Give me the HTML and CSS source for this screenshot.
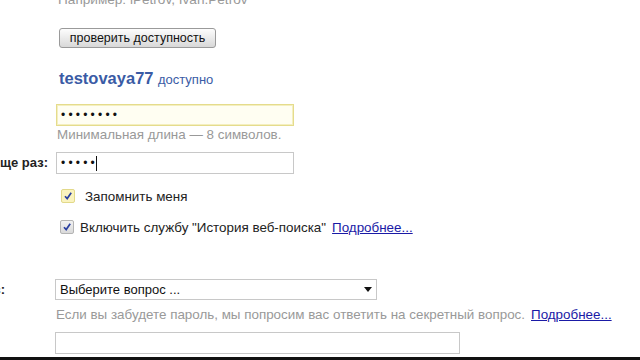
FILE: index.html
```html
<!DOCTYPE html>
<html lang="ru">
<head>
    <meta charset="UTF-8">
    <title>Регистрация</title>
    <link rel="stylesheet" href="styles.css">
</head>
<body>
    <div class="page">
        <div class="form">
            <div class="row row-example">
                <div class="label"></div>
                <div class="field"><div class="hint hint-example">Например: iPetrov, Ivan.Petrov</div></div>
            </div>

            <div class="row row-check">
                <div class="label"></div>
                <div class="field"><button class="btn">проверить доступность</button></div>
            </div>

            <div class="row row-login">
                <div class="label"></div>
                <div class="field"><span class="login">testovaya77</span> <span class="free">доступно</span></div>
            </div>

            <div class="row row-pass">
                <div class="label"></div>
                <div class="field">
                    <div class="input input-active"><span class="dots">••••••••</span></div>
                    <div class="hint hint-pass">Минимальная длина — 8 символов.</div>
                </div>
            </div>

            <div class="row row-pass2">
                <div class="label"><span>Введите пароль еще раз:</span></div>
                <div class="field">
                    <div class="input"><span class="dots">•••••</span><span class="caret"></span></div>
                </div>
            </div>

            <div class="row row-remember">
                <div class="label"></div>
                <div class="field check-line">
                    <span class="checkbox checkbox-focus">
                        <svg width="10" height="10" viewBox="0 0 10 10"><path d="M2 5.2 L4.2 7.6 L8.2 1.8" fill="none" stroke="#2a3fa0" stroke-width="1.7"/></svg>
                    </span>
                    <span class="check-text check-text-wide">Запомнить меня</span>
                </div>
            </div>

            <div class="row row-history">
                <div class="label"></div>
                <div class="field check-line">
                    <span class="checkbox">
                        <svg width="10" height="10" viewBox="0 0 10 10"><path d="M2 5.2 L4.2 7.6 L8.2 1.8" fill="none" stroke="#2a3fa0" stroke-width="1.7"/></svg>
                    </span>
                    <span class="check-text">Включить службу "История веб-поиска"</span>
                    <a class="more" href="#">Подробнее...</a>
                </div>
            </div>

            <div class="row row-question">
                <div class="label label-question"><span>Секретный вопрос:</span></div>
                <div class="field">
                    <div class="select">
                        <span>Выберите вопрос ...</span>
                        <svg width="8" height="5" viewBox="0 0 8 5"><path d="M0 0 H8 L4 5 Z" fill="#111"/></svg>
                    </div>
                    <div class="hint hint-question">Если вы забудете пароль, мы попросим вас ответить на секретный вопрос.<a class="more" href="#">Подробнее...</a></div>
                    <div class="input input-answer"></div>
                </div>
            </div>
        </div>
        <div class="video-bar"></div>
    </div>
</body>
</html>
```

FILE: styles.css
```css
* {
    margin: 0;
    padding: 0;
    box-sizing: border-box;
}

body {
    font-family: "Liberation Sans", Arial, sans-serif;
    background: #fff;
    color: #222;
    overflow: hidden;
}

.page {
    height: 360px;
    display: flex;
    flex-direction: column;
    overflow: hidden;
}

.form {
    flex: 1;
}

.row {
    display: flex;
    gap: 7px;
}

.label {
    width: 48px;
    flex-shrink: 0;
    display: flex;
    justify-content: flex-end;
    white-space: nowrap;
    font-size: 13px;
    font-weight: bold;
    color: #222;
    line-height: 22px;
}

.label-question {
    padding-right: 43px;
}

.field {
    flex: 1;
    min-width: 0;
}

.hint {
    color: #999;
    font-size: 13.4px;
    line-height: 16px;
    white-space: nowrap;
}

.row-example {
    margin-top: -8px;
}

.hint-example {
    font-size: 13.6px;
    padding-left: 3px;
}

.row-check {
    margin-top: 20px;
}

.btn {
    display: block;
    margin-left: 4px;
    width: 157px;
    height: 20px;
    font-family: "Liberation Sans", Arial, sans-serif;
    font-size: 12.5px;
    color: #111;
    border: 1px solid #9a9a9a;
    border-radius: 3px;
    background: linear-gradient(#fdfdfd 0%, #e9e9e9 55%, #d8d8d8 100%);
}

.row-login {
    margin-top: 20px;
    line-height: 20px;
}

.row-login .field {
    padding-left: 4px;
}

.login {
    color: #3a5ba5;
    font-size: 16.5px;
    font-weight: bold;
}

.free {
    color: #3a5ba5;
    font-size: 13px;
}

.row-pass {
    margin-top: 14px;
}

.input {
    width: 238px;
    height: 22px;
    border: 1px solid #c8c8c8;
    background: #fff;
    display: flex;
    align-items: center;
    padding-left: 4px;
    margin-left: 1px;
}

.input-active {
    border-color: #e5dc8c;
    box-shadow: inset 0 0 0 1px #f4efc0;
    background: #fffef2;
}

.dots {
    font-size: 12px;
    letter-spacing: 3.2px;
    color: #111;
    line-height: 14px;
}

.caret {
    display: inline-block;
    width: 1px;
    height: 15px;
    margin-left: -2px;
    background: #111;
}

.hint-pass {
    margin-top: 1px;
    padding-left: 2px;
}

.row-pass2 {
    margin-top: 9px;
}

.check-line {
    display: flex;
    align-items: center;
    font-size: 13.4px;
    color: #222;
    height: 14px;
}

.checkbox {
    width: 14px;
    height: 14px;
    border: 1px solid #b4b4b4;
    border-radius: 2px;
    background: linear-gradient(#f2f2f2, #d9d9d9);
    display: flex;
    align-items: center;
    justify-content: center;
    margin-left: 5px;
}

.checkbox-focus {
    margin-left: 6px;
    border-color: #e2d98a;
    background: #faf3bf;
}

.check-text {
    margin-left: 6px;
}

.check-text-wide {
    margin-left: 10px;
}

.more {
    color: #1a1aa6;
    margin-left: 6px;
}

.row-remember {
    margin-top: 15px;
}

.row-history {
    margin-top: 17px;
}

.row-question {
    margin-top: 45px;
}

.select {
    width: 322px;
    height: 21px;
    border: 1px solid #c8c8c8;
    display: flex;
    align-items: center;
    justify-content: space-between;
    padding: 0 4px 0 4px;
    font-size: 13px;
    color: #111;
}

.hint-question {
    margin-top: 7px;
    padding-left: 1px;
}

.input-answer {
    width: 405px;
    margin-left: 0;
    margin-top: 9px;
}

.video-bar {
    height: 3px;
    background: #111;
    flex-shrink: 0;
}
```
